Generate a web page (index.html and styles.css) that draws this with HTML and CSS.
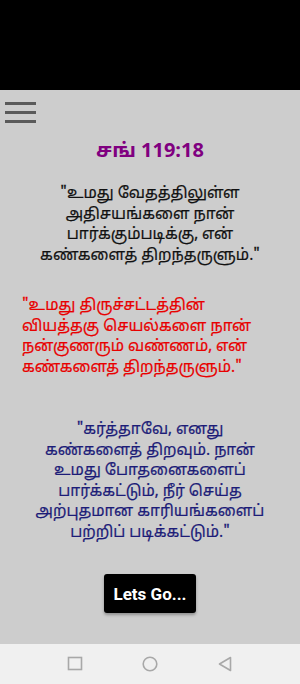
FILE: index.html
```html
<!DOCTYPE html>
<html lang="ta">
<head>
    <meta charset="UTF-8">
    <meta name="viewport" content="width=device-width, initial-scale=1.0">
    <title>சங் 119:18</title>
    <link rel="stylesheet" href="styles.css">
</head>
<body>
<div class="status-bar"></div>

<div class="screen">
    <!-- Меню -->
    <div class="menu-button">
        <span></span>
        <span></span>
        <span></span>
    </div>

    <h1 class="verse-ref">சங் 119:18</h1>

    <p class="verse verse-black">"உமது வேதத்திலுள்ள<br>அதிசயங்களை நான்<br>பார்க்கும்படிக்கு, என்<br>கண்களைத் திறந்தருளும்."</p>

    <p class="verse verse-red">"உமது திருச்சட்டத்தின்<br>வியத்தகு செயல்களை நான்<br>நன்குணரும் வண்ணம், என்<br>கண்களைத் திறந்தருளும்."</p>

    <p class="verse verse-blue">"கர்த்தாவே, எனது<br>கண்களைத் திறவும். நான்<br>உமது போதனைகளைப்<br>பார்க்கட்டும், நீர் செய்த<br>அற்புதமான காரியங்களைப்<br>பற்றிப் படிக்கட்டும்."</p>

    <button class="button" id="letsGoButton">Lets Go...</button>
</div>

<div class="nav-bar">
    <svg width="16" height="16" viewBox="0 0 16 16"><rect x="1.5" y="1.5" width="13" height="12" fill="none" stroke="#a8a8a8" stroke-width="1.6"/></svg>
    <svg width="16" height="16" viewBox="0 0 16 16"><circle cx="8" cy="8" r="6.8" fill="none" stroke="#a8a8a8" stroke-width="1.6"/></svg>
    <svg width="16" height="16" viewBox="0 0 16 16"><path d="M13.5 1.5 L2.5 8 L13.5 14.5 Z" fill="none" stroke="#a8a8a8" stroke-width="1.6" stroke-linejoin="round"/></svg>
</div>
</body>
</html>
```

FILE: styles.css
```css
body {
    font-family: "Noto Sans Tamil", "Noto Sans", Roboto, sans-serif;
    margin: 0;
    width: 300px;
    height: 684px;
    display: flex;
    flex-direction: column;
    overflow: hidden;
}

.status-bar {
    height: 90px;
    background-color: #000;
    flex-shrink: 0;
}

.screen {
    flex: 1;
    background-color: #cdcdcd;
    display: flex;
    flex-direction: column;
    align-items: center;
}

.menu-button {
    align-self: flex-start;
    display: flex;
    flex-direction: column;
    gap: 6px;
    padding: 12px 0 0 5px;
}

.menu-button span {
    display: block;
    width: 31px;
    height: 3px;
    background-color: #5a5a5a;
}

.verse-ref {
    color: #800080;
    font-size: 20px;
    font-weight: bold;
    margin: 17px 0 0 0;
    line-height: 24px;
}

.verse {
    font-size: 15.5px;
    line-height: 20.5px;
    margin: 0;
    -webkit-text-stroke: 0.2px currentColor;
}

.verse-black {
    color: #111;
    text-align: center;
    margin-top: 21px;
}

.verse-red {
    color: #e80000;
    align-self: flex-start;
    padding-left: 22px;
    margin-top: 30px;
}

.verse-blue {
    color: #1c1c78;
    text-align: center;
    margin-top: 42px;
}

.button {
    background-color: #000;
    color: #fff;
    border: none;
    border-radius: 3px;
    font-family: Roboto, sans-serif;
    font-weight: bold;
    font-size: 17px;
    width: 92px;
    height: 39px;
    margin-top: 30px;
    box-shadow: 0 2px 3px rgba(0, 0, 0, 0.3);
    cursor: pointer;
}

.nav-bar {
    height: 40px;
    flex-shrink: 0;
    background-color: #f0f0f0;
    display: flex;
    justify-content: center;
    align-items: center;
    gap: 59px;
}
```
